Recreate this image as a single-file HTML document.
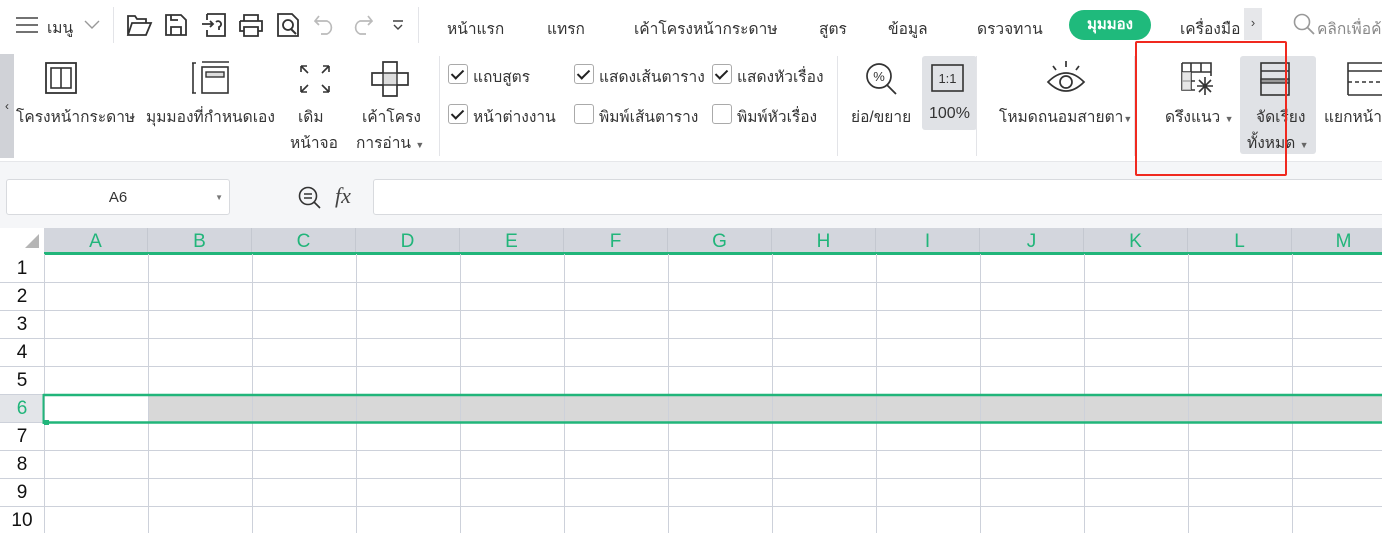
<!DOCTYPE html>
<html><head><meta charset="utf-8"><style>
*{margin:0;padding:0;box-sizing:border-box}
body{width:1382px;height:533px;overflow:hidden;background:#fff;font-family:"Liberation Sans","DejaVu Sans",sans-serif;color:#333;position:relative}
.a{position:absolute;white-space:nowrap}
.t{font-size:15.5px;color:#333}
.tab{font-size:15.5px;color:#333;top:16px}
.cb{position:absolute;width:20px;height:20px;border:1.5px solid #aaa;border-radius:3px;background:#fff}
.cb.on::after{content:"";position:absolute;left:5px;top:2px;width:5px;height:10px;border:solid #222;border-width:0 2.5px 2.5px 0;transform:rotate(45deg)}
.sep{position:absolute;width:1px;background:#e3e4e8}
.col{position:absolute;top:228px;height:26px;width:104px;border-right:1px solid #c4c8d0;color:#21b57a;font-size:19px;text-align:center;line-height:28px}
.row{position:absolute;left:0;width:44px;height:28px;font-size:19px;text-align:center;line-height:30px;color:#111}
svg{position:absolute;overflow:visible}
</style></head><body>
<!-- top bar -->
<svg style="left:15px;top:16px" width="24" height="18"><path d="M1 2H23M1 9H23M1 16H23" stroke="#444" stroke-width="1.6"/></svg>
<div class="a t" style="left:47px;top:15px">เมนู</div>
<svg style="left:84px;top:20px" width="16" height="10"><path d="M1 1L8 8L15 1" stroke="#999" fill="none" stroke-width="1.4"/></svg>
<div class="sep" style="left:113px;top:7px;height:36px"></div>
<svg style="left:126px;top:13px" width="26" height="24"><path d="M2 22V3H9L11 6H20V10M2 22L6 10H25L20 22Z" stroke="#333" fill="none" stroke-width="1.8"/></svg>
<svg style="left:164px;top:13px" width="24" height="24"><path d="M2 2H17L22 7V22H2Z M7 22V14H17V22 M7 2V7H14" stroke="#333" fill="none" stroke-width="1.8"/></svg>
<svg style="left:201px;top:12px" width="26" height="26"><path d="M6 2H24V24H6V18 M6 8V2 M1 12H12M9 9L12 12L9 15 M15 10a3 3 0 1 1 3 5v3" stroke="#333" fill="none" stroke-width="1.8"/></svg>
<svg style="left:238px;top:13px" width="26" height="24"><path d="M6 8V2H20V8 M2 8H24V18H20 M6 18H2V8 M6 14H20V23H6Z" stroke="#333" fill="none" stroke-width="1.8"/></svg>
<svg style="left:276px;top:12px" width="26" height="26"><path d="M2 2H16L22 8V24H2Z" stroke="#333" fill="none" stroke-width="1.8"/><circle cx="12" cy="13" r="5" stroke="#333" fill="none" stroke-width="1.8"/><path d="M15 17L20 22" stroke="#333" stroke-width="2"/></svg>
<svg style="left:313px;top:14px" width="24" height="22"><path d="M6 2L2 7L6 11 M2 7H14a7 7 0 0 1 0 13H8" stroke="#bbb" fill="none" stroke-width="1.7"/></svg>
<svg style="left:350px;top:14px" width="24" height="22"><path d="M18 2L22 7L18 11 M22 7H10a7 7 0 0 0 0 13H16" stroke="#bbb" fill="none" stroke-width="1.7"/></svg>
<svg style="left:392px;top:20px" width="12" height="12"><path d="M1 1H11 M2 5L6 9L10 5" stroke="#444" fill="none" stroke-width="1.4"/></svg>
<div class="sep" style="left:418px;top:7px;height:36px"></div>
<div class="a tab" style="left:447px">หน้าแรก</div>
<div class="a tab" style="left:547px">แทรก</div>
<div class="a tab" style="left:634px">เค้าโครงหน้ากระดาษ</div>
<div class="a tab" style="left:819px">สูตร</div>
<div class="a tab" style="left:888px">ข้อมูล</div>
<div class="a tab" style="left:977px">ดรวจทาน</div>
<div class="a" style="left:1069px;top:10px;width:82px;height:30px;border-radius:15px;background:#1fba7c;color:#fff;font-weight:bold;font-size:15px;text-align:center;line-height:30px">มุมมอง</div>
<div class="a tab" style="left:1180px">เครื่องมือ</div>
<div class="a" style="left:1244px;top:8px;width:18px;height:32px;background:#e6e7ea;color:#444;font-size:13px;text-align:center;line-height:30px">›</div>
<svg style="left:1293px;top:13px" width="22" height="22"><circle cx="9" cy="9" r="7.5" stroke="#999" fill="none" stroke-width="1.6"/><path d="M14.5 14.5L21 21" stroke="#999" stroke-width="1.8"/></svg>
<div class="a" style="left:1317px;top:16px;font-size:15.5px;color:#888">คลิกเพื่อค้</div>
<!-- ribbon -->
<div class="a" style="left:0;top:54px;width:14px;height:104px;background:#d0d2d7;color:#333;font-size:12px;line-height:104px;text-align:center">‹</div>
<svg style="left:45px;top:62px" width="32" height="32"><rect x="1" y="1" width="30" height="30" stroke="#333" fill="none" stroke-width="1.8"/><rect x="6" y="6" width="20" height="20" stroke="#333" fill="none" stroke-width="1.6"/><path d="M16 6V26" stroke="#333" stroke-width="1.6"/></svg>
<div class="a t" style="left:16px;top:104px">โครงหน้ากระดาษ</div>
<svg style="left:192px;top:61px" width="38" height="34"><path d="M1 2V32M0 2H4M0 32H4 M10 1H37" stroke="#333" stroke-width="1.6"/><rect x="10" y="6" width="26" height="26" stroke="#333" fill="none" stroke-width="1.6"/><rect x="14" y="11" width="18" height="5" stroke="#333" fill="#ddd" stroke-width="1.4"/></svg>
<div class="a t" style="left:146px;top:104px">มุมมองที่กำหนดเอง</div>
<svg style="left:299px;top:64px" width="32" height="30"><path d="M2 2L9 9M2 2H8M2 2V8 M30 2L23 9M30 2H24M30 2V8 M2 28L9 21M2 28H8M2 28V22 M30 28L23 21M30 28H24M30 28V22" stroke="#333" stroke-width="1.6" fill="none"/></svg>
<div class="a t" style="left:298px;top:104px">เดิม</div>
<div class="a t" style="left:290px;top:130px">หน้าจอ</div>
<svg style="left:371px;top:61px" width="38" height="36"><path d="M12 1H26V12H37V24H26V35H12V24H1V12H12Z" stroke="#333" fill="none" stroke-width="1.7"/><rect x="12" y="12" width="14" height="12" fill="#ddd" stroke="#333" stroke-width="1.4"/></svg>
<div class="a t" style="left:362px;top:104px">เค้าโครง</div>
<div class="a t" style="left:356px;top:130px">การอ่าน <span style="font-size:9px;color:#666">▼</span></div>
<div class="sep" style="left:439px;top:56px;height:100px"></div>
<div class="cb on" style="left:448px;top:64px"></div><div class="a t" style="left:473px;top:64px">แถบสูตร</div>
<div class="cb on" style="left:448px;top:104px"></div><div class="a t" style="left:473px;top:104px">หน้าต่างงาน</div>
<div class="cb on" style="left:574px;top:64px"></div><div class="a t" style="left:599px;top:64px">แสดงเส้นตาราง</div>
<div class="cb" style="left:574px;top:104px"></div><div class="a t" style="left:599px;top:104px">พิมพ์เส้นตาราง</div>
<div class="cb on" style="left:712px;top:64px"></div><div class="a t" style="left:737px;top:64px">แสดงหัวเรื่อง</div>
<div class="cb" style="left:712px;top:104px"></div><div class="a t" style="left:737px;top:104px">พิมพ์หัวเรื่อง</div>
<div class="sep" style="left:837px;top:56px;height:100px"></div>
<svg style="left:865px;top:62px" width="34" height="34"><circle cx="14" cy="14" r="12" stroke="#333" fill="none" stroke-width="1.7"/><path d="M22 23L31 32" stroke="#333" stroke-width="1.8"/><text x="14" y="19" font-size="13" text-anchor="middle" fill="#333" font-family="Liberation Sans">%</text></svg>
<div class="a t" style="left:851px;top:104px">ย่อ/ขยาย</div>
<div class="a" style="left:922px;top:56px;width:55px;height:74px;background:#e0e2e6;border-radius:3px"></div>
<svg style="left:931px;top:64px" width="34" height="28"><rect x="1" y="1" width="31" height="26" stroke="#333" fill="none" stroke-width="1.6"/><text x="16.5" y="19" font-size="13" text-anchor="middle" fill="#333" font-family="Liberation Sans">1:1</text></svg>
<div class="a t" style="left:929px;top:105px;font-size:16px">100%</div>
<div class="sep" style="left:976px;top:56px;height:100px"></div>
<svg style="left:1046px;top:60px" width="40" height="34"><path d="M20 1V7M7 6L10 10M33 6L30 10 M2 22Q20 4 38 22Q20 40 2 22Z" stroke="#333" fill="none" stroke-width="1.7"/><circle cx="20" cy="22" r="6" stroke="#333" fill="none" stroke-width="1.7"/></svg>
<div class="a t" style="left:999px;top:104px">โหมดถนอมสายตา<span style="font-size:9px;color:#666">▼</span></div>
<div class="sep" style="left:1134px;top:56px;height:100px"></div>
<svg style="left:1181px;top:62px" width="34" height="34"><path d="M1 1H30V14M1 1V28H14 M1 10H30 M1 19H14 M10 1V28 M20 1V10" stroke="#333" fill="none" stroke-width="1.6"/><rect x="1" y="10" width="9" height="18" fill="#ddd" opacity=".7"/><path d="M24 15V33M16 24H32M18 18L30 30M30 18L18 30" stroke="#333" stroke-width="1.6"/></svg>
<div class="a t" style="left:1165px;top:104px">ดรึงแนว <span style="font-size:9px;color:#666">▼</span></div>
<div class="a" style="left:1240px;top:56px;width:76px;height:98px;background:#e0e2e6;border-radius:3px"></div>
<svg style="left:1260px;top:62px" width="30" height="34"><rect x="1" y="1" width="28" height="32" stroke="#333" fill="none" stroke-width="1.6"/><path d="M1 9H29" stroke="#333" stroke-width="1.6"/><rect x="1" y="17" width="28" height="4" fill="#999" stroke="#333" stroke-width="1.4"/></svg>
<div class="a t" style="left:1256px;top:104px">จัดเรียง</div>
<div class="a t" style="left:1247px;top:130px">ทั้งหมด <span style="font-size:9px;color:#666">▼</span></div>
<svg style="left:1347px;top:62px" width="40" height="34"><path d="M1 33V1H40M1 9H40" stroke="#333" fill="none" stroke-width="1.6"/><path d="M1 20H40" stroke="#333" stroke-width="1.4" stroke-dasharray="4 3"/><path d="M1 33H40" stroke="#333" stroke-width="1.6"/></svg>
<div class="a t" style="left:1324px;top:104px">แยกหน้า</div>
<!-- formula bar -->
<div class="a" style="left:0;top:161px;width:1382px;height:67px;background:#f5f6f8;border-top:1px solid #e6e7ea"></div>
<div class="a" style="left:6px;top:179px;width:224px;height:36px;background:#fff;border:1px solid #d8dade;border-radius:3px;font-size:15px;text-align:center;line-height:36px;color:#333">A6<span style="position:absolute;right:6px;font-size:8px;color:#777">▼</span></div>
<svg style="left:298px;top:186px" width="24" height="24"><circle cx="10" cy="10" r="8.5" stroke="#333" fill="none" stroke-width="1.6"/><path d="M16 16L22 22M6 8H14M6 12H14" stroke="#333" stroke-width="1.6"/></svg>
<div class="a" style="left:335px;top:183px;font-family:'Liberation Serif',serif;font-style:italic;font-size:22px;color:#444">fx</div>
<div class="a" style="left:373px;top:179px;width:1020px;height:36px;background:#fff;border:1px solid #d8dade;border-radius:3px"></div>
<div class="a" style="left:1135px;top:41px;width:152px;height:135px;border:2.5px solid #f0291f;border-radius:2px"></div>
<!-- grid -->
<div class="a" style="left:0;top:228px;width:1382px;height:26px;background:#d3d6dd"></div>
<div class="a" style="left:0;top:228px;width:44px;height:26px;background:#fff"></div>
<svg style="left:24px;top:233px" width="16" height="16"><path d="M15 1V15H1Z" fill="#b5b5b5"/></svg>
<div class="col" style="left:44px">A</div><div class="col" style="left:148px">B</div><div class="col" style="left:252px">C</div><div class="col" style="left:356px">D</div><div class="col" style="left:460px">E</div><div class="col" style="left:564px">F</div><div class="col" style="left:668px">G</div><div class="col" style="left:772px">H</div><div class="col" style="left:876px">I</div><div class="col" style="left:980px">J</div><div class="col" style="left:1084px">K</div><div class="col" style="left:1188px">L</div><div class="col" style="left:1292px">M</div>
<div class="a" style="left:44px;top:252px;width:1338px;height:3px;background:#21b57a"></div>
<svg style="left:0;top:254px" width="1382" height="279">
<g stroke="#cdd1da" stroke-width="1">
<path d="M0 28.5H1382M0 56.5H1382M0 84.5H1382M0 112.5H1382M0 140.5H1382M0 168.5H1382M0 196.5H1382M0 224.5H1382M0 252.5H1382"/>
<path d="M44.5 0V279M148.5 0V279M252.5 0V279M356.5 0V279M460.5 0V279M564.5 0V279M668.5 0V279M772.5 0V279M876.5 0V279M980.5 0V279M1084.5 0V279M1188.5 0V279M1292.5 0V279"/>
</g>
<rect x="0" y="141" width="44" height="27" fill="#e3e5e9"/>
<rect x="149" y="142" width="1233" height="26" fill="#d8d8d8"/>
<g stroke="#cdd1da"><path d="M252.5 142V168M356.5 142V168M460.5 142V168M564.5 142V168M668.5 142V168M772.5 142V168M876.5 142V168M980.5 142V168M1084.5 142V168M1188.5 142V168M1292.5 142V168"/></g>
<path d="M43 141H1382 M43 168.5H1382" stroke="#21b57a" stroke-width="2.5"/>
<path d="M43.5 140V170" stroke="#21b57a" stroke-width="2"/>
<rect x="44" y="166" width="5" height="5" fill="#21b57a"/>
</svg>
<div class="row" style="top:254px">1</div><div class="row" style="top:282px">2</div><div class="row" style="top:310px">3</div><div class="row" style="top:338px">4</div><div class="row" style="top:366px">5</div><div class="row" style="top:394px;color:#21b57a">6</div><div class="row" style="top:422px">7</div><div class="row" style="top:450px">8</div><div class="row" style="top:478px">9</div><div class="row" style="top:506px">10</div>
</body></html>
